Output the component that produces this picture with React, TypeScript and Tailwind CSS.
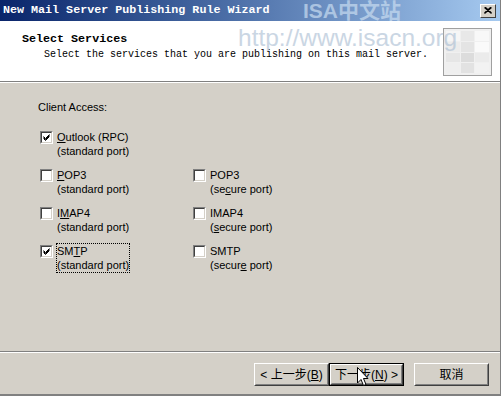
import React from "react";

const sans = { fontFamily: '"Liberation Sans", Arial, sans-serif' } as const;
const mono = { fontFamily: '"Liberation Mono", "Courier New", monospace' } as const;
const cjk = { fontFamily: '"Liberation Sans", "Noto Sans CJK SC", sans-serif' } as const;

function Check({ checked }: { checked?: boolean }) {
  return (
    <div className="w-[13px] h-[13px] shrink-0 border border-t-[#808080] border-l-[#808080] border-b-white border-r-white mt-[1px]">
      <div className="w-full h-full border border-t-[#404040] border-l-[#404040] border-b-[#d4d0c8] border-r-[#d4d0c8] bg-white relative">
        {checked && (
          <svg width="9" height="9" viewBox="0 0 9 9" className="absolute left-0 top-0">
            <path d="M1.5 3.5 L3.5 5.5 L7.5 1.5 M1.5 4.5 L3.5 6.5 L7.5 2.5 M1.5 5.5 L3.5 7.5 L7.5 3.5" stroke="#000" strokeWidth="1" fill="none" />
          </svg>
        )}
      </div>
    </div>
  );
}

function under(s: string, i: number) {
  if (i < 0) return <>{s}</>;
  return (
    <>
      {s.slice(0, i)}
      <span className="underline">{s[i]}</span>
      {s.slice(i + 1)}
    </>
  );
}

function Item({ checked, name, u, port, pu, focus }: { checked?: boolean; name: string; u: number; port: string; pu: number; focus?: boolean }) {
  return (
    <div className="flex gap-[4px] items-start">
      <Check checked={checked} />
      <div className={"text-[11px] leading-[14px] text-black " + (focus ? "outline outline-1 outline-dotted outline-black" : "")} style={sans}>
        <div>{under(name, u)}</div>
        <div>{under(port, pu)}</div>
      </div>
    </div>
  );
}

function Btn({ children, focus }: { children: React.ReactNode; focus?: boolean }) {
  return (
    <div className={"w-[75px] h-[23px] " + (focus ? "border border-black" : "")}>
      <div className="w-full h-full border border-t-white border-l-white border-b-[#404040] border-r-[#404040] bg-[#d4d0c8]">
        <div className="w-full h-full border border-t-[#d4d0c8] border-l-[#d4d0c8] border-b-[#808080] border-r-[#808080] flex items-center justify-center text-[12px] text-black" style={cjk}>
          {children}
        </div>
      </div>
    </div>
  );
}

export default function App() {
  return (
    <div className="w-[501px] h-[396px] bg-[#d4d0c8] flex flex-col relative overflow-hidden border-b-2 border-b-[#808080] border-r border-r-[#808080]">
      {/* title bar */}
      <div className="h-[21px] shrink-0 flex items-center justify-between pl-[3px] pr-[4px] bg-gradient-to-r from-[#0a246a] to-[#a6caf0]">
        <div className="text-white font-bold text-[11.7px] leading-none" style={mono}>New Mail Server Publishing Rule Wizard</div>
        <div className="w-[16px] h-[14px] bg-[#d4d0c8] border border-t-white border-l-white border-b-[#404040] border-r-[#404040] flex items-center justify-center">
          <svg width="8" height="7" viewBox="0 0 8 7">
            <path d="M0.5 0.5 L7.5 6.5 M7.5 0.5 L0.5 6.5 M1.5 0.5 L7.5 6 M6.5 0.5 L0.5 6" stroke="#000" strokeWidth="1.2" />
          </svg>
        </div>
      </div>
      {/* header */}
      <div className="h-[61px] shrink-0 bg-white border-b border-b-[#808080] flex justify-between pl-[22px] pr-[8px]">
        <div className="pt-[11px]" style={mono}>
          <div className="font-bold text-[11.7px] leading-[14px] text-black">Select Services</div>
          <div className="text-[10px] leading-[14px] text-black pl-[22px] pt-[2px]">Select the services that you are publishing on this mail server.</div>
        </div>
        <div className="mt-[7px] w-[49px] h-[48px] border border-[#a0a0a0] bg-[#f0f0f0] grid grid-cols-3 grid-rows-4 gap-[1px] p-[2px]">
          <div className="bg-[#f6f6f6]" />
          <div className="bg-[#e8e8e8]" />
          <div className="bg-[#f8f8f8]" />
          <div className="bg-[#ececec]" />
          <div className="bg-[#e4e4e4]" />
          <div className="bg-[#fafafa]" />
          <div className="bg-[#e6e6e6]" />
          <div className="bg-[#dcdcdc]" />
          <div className="bg-[#ebebeb]" />
          <div className="bg-[#efefef]" />
          <div className="bg-[#e2e2e2]" />
          <div className="bg-[#f2f2f2]" />
        </div>
      </div>
      <div className="h-px bg-white shrink-0" />
      {/* body */}
      <div className="flex-1 flex flex-col pl-[38px] pt-[17px]">
        <div className="text-[11px] leading-[14px] text-black" style={sans}>Client Access:</div>
        <div className="pl-[2px] pt-[16px] grid grid-cols-[153px_auto] gap-y-[10px]">
          <Item checked name="Outlook (RPC)" u={0} port="(standard port)" pu={-1} />
          <div />
          <Item name="POP3" u={0} port="(standard port)" pu={-1} />
          <Item name="POP3" u={-1} port="(secure port)" pu={3} />
          <Item name="IMAP4" u={1} port="(standard port)" pu={-1} />
          <Item name="IMAP4" u={-1} port="(secure port)" pu={1} />
          <Item checked name="SMTP" u={2} port="(standard port)" pu={-1} focus />
          <Item name="SMTP" u={-1} port="(secure port)" pu={6} />
        </div>
      </div>
      {/* separator */}
      <div className="h-px bg-[#808080] shrink-0" />
      <div className="h-px bg-white shrink-0" />
      {/* buttons */}
      <div className="h-[41px] shrink-0 flex items-start pt-[10px] pl-[254px]">
        <Btn>&lt; 上一步(<span className="underline">B</span>)</Btn>
        <Btn focus>下一步(<span className="underline">N</span>) &gt;</Btn>
        <div className="w-[10px]" />
        <Btn>取消</Btn>
      </div>
      {/* watermark */}
      <div className="absolute left-[303px] top-[0px] text-[21px] leading-[21px] font-bold text-[#c8dcf0] opacity-70" style={cjk}>ISA中文站</div>
      <div className="absolute left-[238px] top-[25px] text-[24.5px] leading-[26px] text-[#a8bcd2] opacity-60" style={sans}>http://www.isacn.org</div>
      {/* cursor */}
      <svg className="absolute left-[357px] top-[367px]" width="12" height="20" viewBox="0 0 12 20">
        <path d="M0.5 0.5 L0.5 16 L4 12.5 L6.5 18.5 L9 17.5 L6.5 11.5 L11 11.5 Z" fill="#fff" stroke="#000" strokeWidth="1" />
      </svg>
    </div>
  );
}
